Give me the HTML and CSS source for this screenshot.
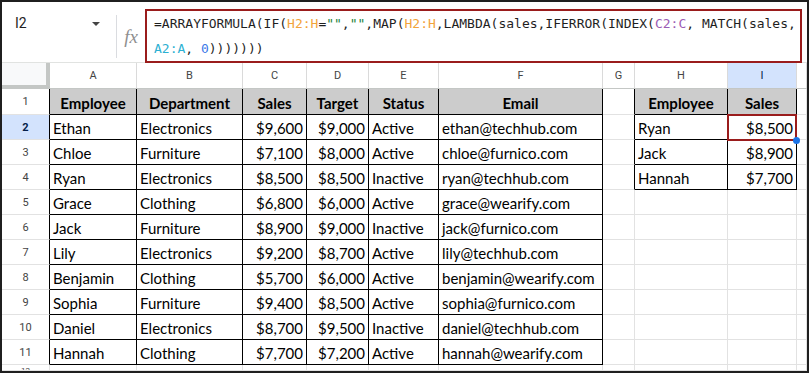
FILE: index.html
```html
<!DOCTYPE html>
<html lang="en">
<head>
  <meta charset="UTF-8">
  <title>Sales lookup</title>
  <link rel="stylesheet" href="styles.css">
</head>
<body>
  <div class="sheet">
    <div class="fbar">
      <div class="namebox">
        <span class="name">I2</span>
        <span class="caret"></span>
      </div>
      <div class="fx">fx</div>
      <div class="formula">=ARRAYFORMULA(IF(<span class="r1">H2:H</span>=<span class="str">""</span>,<span class="str">""</span>,MAP(<span class="r1">H2:H</span>,LAMBDA(sales,IFERROR(INDEX(<span class="r2">C2:C</span>, MATCH(sales,<br><span class="r3">A2:A</span>, <span class="nm">0</span>)))))))</div>
    </div>

    <div class="grid">
      <script>
        const letters = ['A', 'B', 'C', 'D', 'E', 'F', 'G', 'H', 'I'];
        const data = [
          ['Ethan', 'Electronics', '$9,600', '$9,000', 'Active', 'ethan@techhub.com'],
          ['Chloe', 'Furniture', '$7,100', '$8,000', 'Active', 'chloe@furnico.com'],
          ['Ryan', 'Electronics', '$8,500', '$8,500', 'Inactive', 'ryan@techhub.com'],
          ['Grace', 'Clothing', '$6,800', '$6,000', 'Active', 'grace@wearify.com'],
          ['Jack', 'Furniture', '$8,900', '$9,000', 'Inactive', 'jack@furnico.com'],
          ['Lily', 'Electronics', '$9,200', '$8,700', 'Active', 'lily@techhub.com'],
          ['Benjamin', 'Clothing', '$5,700', '$6,000', 'Active', 'benjamin@wearify.com'],
          ['Sophia', 'Furniture', '$9,400', '$8,500', 'Active', 'sophia@furnico.com'],
          ['Daniel', 'Electronics', '$8,700', '$9,500', 'Inactive', 'daniel@techhub.com'],
          ['Hannah', 'Clothing', '$7,700', '$7,200', 'Active', 'hannah@wearify.com']
        ];
        const lookup = [['Ryan', '$8,500'], ['Jack', '$8,900'], ['Hannah', '$7,700']];

        let html = '<div class="cell corner"></div>';
        letters.forEach(l => {
          html += `<div class="cell colhd ${l === 'I' ? 'hl' : ''}">${l}</div>`;
        });
        html += '<div class="cell colhd"></div>';

        // row 1: headers
        html += '<div class="cell rowhd kr">1</div>';
        ['Employee', 'Department', 'Sales', 'Target', 'Status', 'Email'].forEach(h => {
          html += `<div class="cell b hd">${h}</div>`;
        });
        html += '<div class="cell kr"></div>';
        html += '<div class="cell b hd">Employee</div><div class="cell b hd">Sales</div>';
        html += '<div class="cell"></div>';

        data.forEach((row, i) => {
          const n = i + 2;
          html += `<div class="cell rowhd kr ${n === 2 ? 'hl' : ''}">${n}</div>`;
          row.forEach((v, j) => {
            html += `<div class="cell b ${j === 2 || j === 3 ? 'num' : ''}">${v}</div>`;
          });
          const lk = lookup[i];
          html += `<div class="cell ${lk ? 'kr' : ''}"></div>`;
          if (lk) {
            html += `<div class="cell b">${lk[0]}</div>`;
            html += `<div class="cell b num ${n === 2 ? 'active' : ''}">${lk[1]}</div>`;
          } else {
            html += '<div class="cell"></div><div class="cell"></div>';
          }
          html += '<div class="cell"></div>';
        });

        // row 12 is only partly visible under the frame
        html += '<div class="cell rowhd last"><span>12</span></div>';
        for (let k = 0; k < 10; k++) html += '<div class="cell"></div>';

        document.write(html);
      </script>
    </div>
  </div>
</body>
</html>
```

FILE: styles.css
```css
body {
  margin: 0;
  background: #fff;
}

.sheet {
  width: 809px;
  height: 373px;
  box-sizing: border-box;
  border: 2px solid #1f1f1f;
  overflow: hidden;
  background: #fff;
}

/* formula bar */
.fbar {
  display: flex;
  height: 60px;
  border-bottom: 1px solid #e1e3e1;
}

.namebox {
  display: flex;
  box-sizing: border-box;
  width: 115px;
  height: 43px;
  margin-top: 13px;
  padding-left: 13px;
  border-right: 1px solid #dadce0;
}

.name {
  font: 14px Roboto, sans-serif;
  line-height: 17px;
  color: #1f1f1f;
}

.caret {
  width: 0;
  height: 0;
  margin: 7px 16px 0 auto;
  border-left: 4px solid transparent;
  border-right: 4px solid transparent;
  border-top: 4px solid #444;
}

.fx {
  width: 28px;
  margin-top: 25px;
  text-align: center;
  font: italic 19px "Liberation Serif", serif;
  line-height: 20px;
  color: #8f8f8f;
}

.formula {
  box-sizing: border-box;
  width: 657px;
  height: 54px;
  margin-top: 7px;
  padding-left: 7px;
  border: 2px solid #9a1c1c;
  font: 13px "DejaVu Sans Mono", monospace;
  line-height: 25px;
  color: #1f1f1f;
  white-space: nowrap;
  overflow: hidden;
}

.r1 { color: #f2a33a; }
.r2 { color: #9b5cb4; }
.r3 { color: #2cb0d2; }
.nm { color: #3b78e7; }
.str { color: #188038; }

/* grid */
.grid {
  display: grid;
  grid-template-columns: 48px 87px 106px 64px 62px 70px 164px 32px 93px 69px 10px;
  grid-template-rows: 26px 26px repeat(10, 25px) 6px;
}

.cell {
  box-sizing: border-box;
  display: flex;
  align-items: flex-end;
  padding: 0 3px 2px;
  border-right: 1px solid #e2e2e2;
  border-bottom: 1px solid #e2e2e2;
  font: 15px Lato, sans-serif;
  line-height: 18px;
  color: #000;
  white-space: nowrap;
  overflow: hidden;
}

.corner {
  background: #f8f9fa;
  border-right: 4px solid #c4c7c5;
  border-bottom: 4px solid #c4c7c5;
}

.colhd {
  justify-content: center;
  align-items: center;
  padding: 0;
  border-right-color: #dadada;
  border-bottom-color: #c4c7c5;
  font: 11px Roboto, sans-serif;
  color: #444;
}

.rowhd {
  justify-content: center;
  align-items: center;
  padding: 0;
  font: 11px Roboto, sans-serif;
  color: #444;
}

.rowhd.last {
  align-items: flex-start;
  padding-top: 2px;
  font-size: 8px;
  line-height: 8px;
}

.hl {
  background: #d3e3fd;
  color: #041e49;
}

.rowhd.hl {
  font-weight: 700;
}

.hd {
  justify-content: center;
  background: #cccccc;
  font-weight: 700;
}

.num {
  justify-content: flex-end;
}

.b {
  border-right-color: #000;
  border-bottom-color: #000;
}

.kr {
  border-right-color: #000;
}

.active {
  position: relative;
  overflow: visible;
}

.active::after {
  content: "";
  position: absolute;
  top: -1px;
  left: -1px;
  right: -1px;
  bottom: -2px;
  border: 2px solid #9a1c1c;
}

.active::before {
  content: "";
  position: absolute;
  right: -4px;
  bottom: -5px;
  width: 7px;
  height: 7px;
  border-radius: 50%;
  background: #1a73e8;
  z-index: 1;
}
```
